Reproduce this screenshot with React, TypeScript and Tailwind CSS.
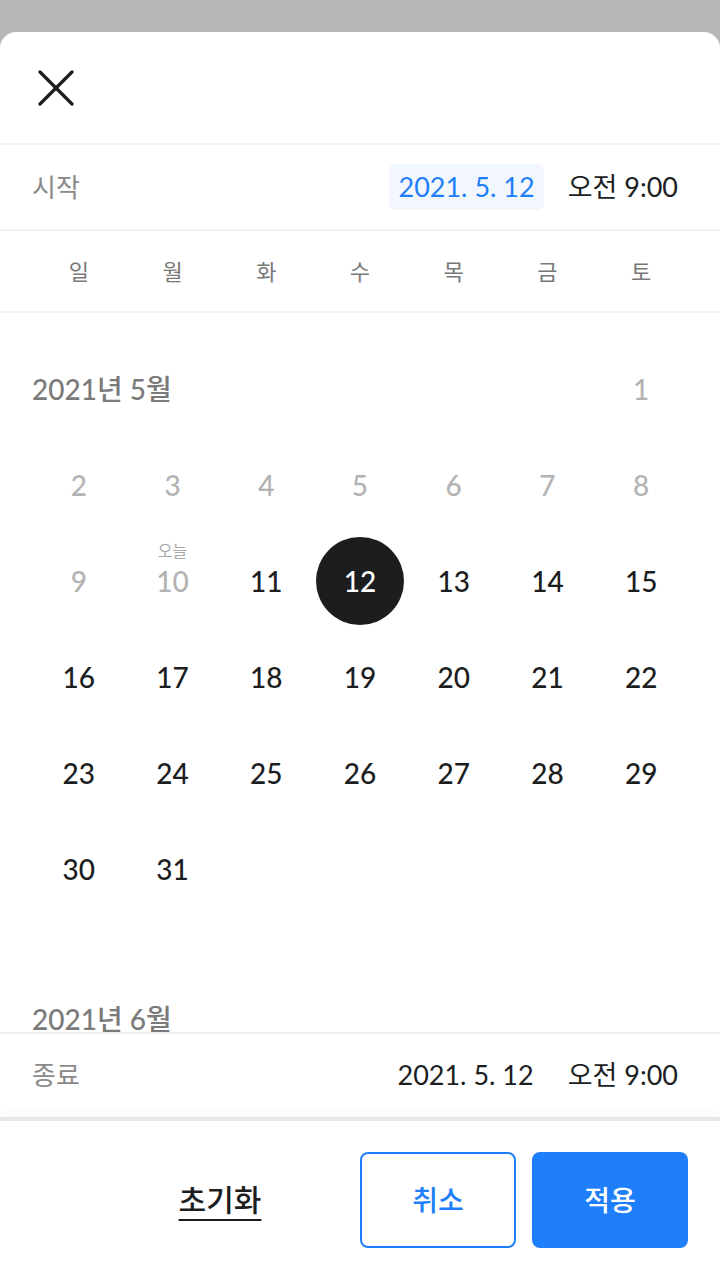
const FONT = "font-['Lato','Noto_Sans_CJK_KR',sans-serif]";

type Day = { n: number; past?: boolean; today?: boolean; selected?: boolean };

function buildMay(): Day[] {
  const days: Day[] = [];
  for (let n = 1; n <= 31; n++) {
    days.push({ n, past: n < 11, today: n === 10, selected: n === 12 });
  }
  return days;
}

const weekdays = ["일", "월", "화", "수", "목", "금", "토"];

function DayCell({ d }: { d: Day }) {
  if (d.selected) {
    return (
      <div className="flex h-24 items-center justify-center">
        <div className="flex h-[88px] w-[88px] items-center justify-center rounded-full bg-[#1c1d1f] text-[28px] font-medium text-white">
          {d.n}
        </div>
      </div>
    );
  }
  return (
    <div className="relative flex h-24 items-center justify-center">
      {d.today && (
        <span className="absolute left-1/2 top-[10px] -translate-x-1/2 text-[16px] leading-none text-[#a8a8a8]">
          오늘
        </span>
      )}
      <span
        className={
          d.past
            ? "text-[28px] font-medium text-[#b3b3b3]"
            : "text-[28px] font-medium text-[#1c1d1f]"
        }
      >
        {d.n}
      </span>
    </div>
  );
}

export default function App() {
  return (
    <div className={`flex h-[1280px] w-[720px] flex-col bg-[#b6b7b9] pt-8 ${FONT}`}>
      <div className="flex flex-1 flex-col overflow-hidden rounded-t-2xl bg-white">
        {/* header */}
        <div className="flex h-[113px] shrink-0 items-center border-b-2 border-[#f1f1f1] px-[38px]">
          <svg width="36" height="36" viewBox="0 0 36 36" fill="none">
            <path
              d="M2 2L34 34M34 2L2 34"
              stroke="#1c1d1f"
              strokeWidth="3.2"
              strokeLinecap="round"
            />
          </svg>
        </div>

        {/* start row */}
        <div className="flex h-[86px] shrink-0 items-center border-b-2 border-[#f1f1f1] pl-8 pr-[42px]">
          <span className="text-[26px] text-[#8a8a8a]">시작</span>
          <div className="ml-auto flex items-center gap-6">
            <span className="rounded-md bg-[#f2f7fe] px-[9px] py-[3px] text-[27px] text-[#1f7ffb]">
              2021. 5. 12
            </span>
            <span className="text-[27px] text-[#1c1d1f]">오전 9:00</span>
          </div>
        </div>

        {/* weekdays */}
        <div className="grid h-[82px] shrink-0 grid-cols-7 items-center border-b-2 border-[#f1f1f1] px-8">
          {weekdays.map((w) => (
            <span key={w} className="text-center text-[22px] text-[#787878]">
              {w}
            </span>
          ))}
        </div>

        {/* calendar scroll area */}
        <div className="min-h-0 flex-1 overflow-hidden">
          <div className="grid grid-cols-7 px-8 pb-[26px] pt-[28px]">
            <div className="col-span-6 flex h-24 items-center">
              <span className="text-[28px] font-medium text-[#7a7a7a]">2021년 5월</span>
            </div>
            {buildMay().map((d) => (
              <DayCell key={d.n} d={d} />
            ))}
          </div>
          <div className="px-8 pt-[28px]">
            <div className="flex h-24 items-center">
              <span className="text-[28px] font-medium text-[#7a7a7a]">2021년 6월</span>
            </div>
          </div>
        </div>

        {/* end row */}
        <div className="flex h-[85px] shrink-0 items-center border-t-2 border-[#f1f1f1] pl-8 pr-[42px]">
          <span className="text-[26px] text-[#8a8a8a]">종료</span>
          <div className="ml-auto flex items-center gap-[34px]">
            <span className="text-[27px] text-[#1c1d1f]">2021. 5. 12</span>
            <span className="text-[27px] text-[#1c1d1f]">오전 9:00</span>
          </div>
        </div>

        {/* footer */}
        <div className="flex h-[163px] shrink-0 items-center justify-end border-t-4 border-[#e6e6e6] px-8 pb-[2px] shadow-[0_-6px_8px_rgba(0,0,0,0.025)]">
          <button className="mr-[62px] w-[156px] text-[30px] font-medium text-[#1c1d1f] underline decoration-2 underline-offset-[8px]">
            초기화
          </button>
          <button className="mr-4 flex h-24 w-[156px] items-center justify-center rounded-lg border-2 border-[#1f7ffb] text-[28px] font-medium text-[#1f7ffb]">
            취소
          </button>
          <button className="flex h-24 w-[156px] items-center justify-center rounded-lg bg-[#1f7ffb] text-[28px] font-medium text-white">
            적용
          </button>
        </div>
      </div>
    </div>
  );
}
